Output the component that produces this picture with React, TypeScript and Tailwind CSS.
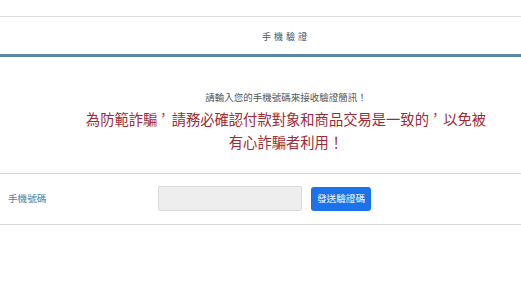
import React from "react";

function Comma() {
  return <span className="inline-block -translate-y-[0.3em] -translate-x-[0.05em] scale-[0.85]">，</span>;
}

export default function App() {
  return (
    <div lang="zh-Hant-TW" className="w-[521px] h-[304px] bg-white overflow-hidden font-['Noto_Sans_CJK_TC','Noto_Sans_CJK_SC',sans-serif]">
      <div className="h-[16px]" />
      <div className="border-t border-[#dddddd] h-[38px] flex items-center justify-center pl-[51px]">
        <span className="text-[9px] tracking-[3px] text-[#40596d] leading-none pt-[1px]">手機驗證</span>
      </div>
      <div className="h-[3px] bg-[#5a86a5]" />
      <div className="flex flex-col items-center pl-[51px] mt-[33px]">
        <div className="text-[9.5px] leading-[14px] text-[#555555]">請輸入您的手機號碼來接收驗證簡訊！</div>
        <div className="mt-[2.5px] text-[14.3px] leading-[23px] text-[#9e2b36] text-center">
          <div className="whitespace-nowrap">
            為防範詐騙<Comma />請務必確認付款對象和商品交易是一致的<Comma />以免被
          </div>
          <div className="whitespace-nowrap">有心詐騙者利用！</div>
        </div>
      </div>
      <div className="mt-[20px] border-t border-b border-[#d6d6d6] h-[52px] flex items-center pl-[8px]">
        <div className="w-[150px] text-[9.6px] text-[#4a7fa8]">手機號碼</div>
        <div className="w-[144px] h-[25px] bg-[#eeeeee] border border-[#dadada] rounded-[2px]" />
        <button className="ml-[9px] w-[60px] h-[24px] bg-[#1a73e8] rounded-[3px] text-white text-[9.6px] leading-none flex items-center justify-center">
          發送驗證碼
        </button>
      </div>
    </div>
  );
}
